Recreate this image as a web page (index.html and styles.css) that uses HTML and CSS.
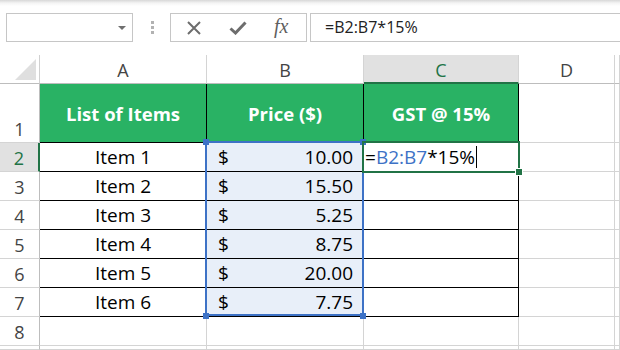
FILE: index.html
```html
<!DOCTYPE html>
<html lang="en">
<head>
    <meta charset="UTF-8">
    <title>GST formula</title>
    <link rel="stylesheet" href="styles.css">
</head>
<body>
    <div class="toolbar">
        <div class="namebox">
            <span class="arrow"></span>
        </div>
        <div class="dots"><span></span><span></span><span></span></div>
        <div class="fx-buttons">
            <svg class="icon" width="16" height="14" viewBox="0 0 16 14">
                <path d="M2 1 L14 13 M14 1 L2 13" stroke="#6d6d6d" stroke-width="2" fill="none"/>
            </svg>
            <svg class="icon" width="18" height="14" viewBox="0 0 18 14">
                <path d="M1.5 7.5 L6.5 12 L16.5 1.5" stroke="#6d6d6d" stroke-width="3" fill="none"/>
            </svg>
            <span class="fx">fx</span>
        </div>
        <div class="formula">=B2:B7*15%</div>
    </div>

    <div class="sheet">
        <!-- column headers -->
        <div class="c corner"><span class="tri"></span></div>
        <div class="c ch">A</div>
        <div class="c ch">B</div>
        <div class="c ch sel">C</div>
        <div class="c ch">D</div>
        <div class="c ch"></div>

        <!-- row 1 -->
        <div class="c rh">1</div>
        <div class="c t head">List of Items</div>
        <div class="c t head">Price ($)</div>
        <div class="c t head">GST @ 15%</div>
        <div class="c"></div>
        <div class="c"></div>

        <!-- row 2 -->
        <div class="c rh sel">2</div>
        <div class="c t item">Item 1</div>
        <div class="c t price"><span>$</span><span>10.00</span></div>
        <div class="c t edit">=<span class="ref">B2:B7</span>*15%<span class="caret"></span></div>
        <div class="c"></div>
        <div class="c"></div>

        <div class="c rh">3</div>
        <div class="c t item">Item 2</div>
        <div class="c t price"><span>$</span><span>15.50</span></div>
        <div class="c t"></div>
        <div class="c"></div>
        <div class="c"></div>

        <div class="c rh">4</div>
        <div class="c t item">Item 3</div>
        <div class="c t price"><span>$</span><span>5.25</span></div>
        <div class="c t"></div>
        <div class="c"></div>
        <div class="c"></div>

        <div class="c rh">5</div>
        <div class="c t item">Item 4</div>
        <div class="c t price"><span>$</span><span>8.75</span></div>
        <div class="c t"></div>
        <div class="c"></div>
        <div class="c"></div>

        <div class="c rh">6</div>
        <div class="c t item">Item 5</div>
        <div class="c t price"><span>$</span><span>20.00</span></div>
        <div class="c t"></div>
        <div class="c"></div>
        <div class="c"></div>

        <div class="c rh">7</div>
        <div class="c t item">Item 6</div>
        <div class="c t price"><span>$</span><span>7.75</span></div>
        <div class="c t"></div>
        <div class="c"></div>
        <div class="c"></div>

        <div class="c rh">8</div>
        <div class="c"></div>
        <div class="c"></div>
        <div class="c"></div>
        <div class="c"></div>
        <div class="c"></div>

        <div class="c rh"></div>
        <div class="c"></div>
        <div class="c"></div>
        <div class="c"></div>
        <div class="c"></div>
        <div class="c"></div>

        <!-- selection overlays -->
        <div class="range"></div>
        <span class="handle blue h-tl"></span>
        <span class="handle blue h-tr"></span>
        <span class="handle blue h-bl"></span>
        <span class="handle blue h-br"></span>
        <div class="active"></div>
        <span class="handle green h-active"></span>
    </div>
</body>
</html>
```

FILE: styles.css
```css
body {
    margin: 0;
    width: 620px;
    height: 350px;
    overflow: hidden;
    background-color: white;
    font-family: "Open Sans", "Liberation Sans", sans-serif;
    color: #000;
}

.toolbar {
    height: 55px;
    box-sizing: border-box;
    padding: 13px 0 0 6px;
    display: flex;
    align-items: flex-start;
    background: linear-gradient(#d8d8d8, #f4f4f4 3px, #fff 6px);
}

.namebox {
    width: 127px;
    height: 29px;
    box-sizing: border-box;
    border: 1px solid #c6c6c6;
    background-color: white;
    position: relative;
}

.arrow {
    position: absolute;
    left: 111px;
    top: 12px;
    border-left: 4px solid transparent;
    border-right: 4px solid transparent;
    border-top: 4px solid #6f6f6f;
}

.dots {
    margin-left: 18px;
    padding-top: 8px;
    display: flex;
    flex-direction: column;
    gap: 2px;
}

.dots span {
    width: 3px;
    height: 3px;
    background-color: #b2b2b2;
}

.fx-buttons {
    margin-left: 16px;
    width: 137px;
    height: 29px;
    box-sizing: border-box;
    border: 1px solid #c6c6c6;
    display: flex;
    align-items: center;
    padding-left: 15px;
    gap: 27px;
}

.fx {
    font-family: "Liberation Serif", serif;
    font-style: italic;
    font-size: 20px;
    color: #5f5f5f;
    margin-left: 0;
    margin-top: -2px;
}

.formula {
    margin-left: 3px;
    flex: 1;
    height: 29px;
    box-sizing: border-box;
    border: 1px solid #c6c6c6;
    border-right: none;
    padding-left: 14px;
    font-size: 16px;
    line-height: 26px;
    color: #222;
}

.sheet {
    position: relative;
    display: grid;
    grid-template-columns: 40px 167px 157px 155px 96px 1fr;
    grid-template-rows: 29px 59px repeat(7, 29px) 4px;
}

.c {
    box-sizing: border-box;
    border-right: 1px solid #d4d4d4;
    border-bottom: 1px solid #d4d4d4;
    display: flex;
    align-items: center;
    justify-content: center;
    font-size: 19px;
    min-width: 0;
    overflow: hidden;
}

.corner {
    position: relative;
    border-bottom-color: #bdbdbd;
    border-right-color: #d0d0d0;
}

.tri {
    position: absolute;
    left: 15px;
    top: 4px;
    width: 21px;
    height: 21px;
    background-color: #dfdfdf;
    clip-path: polygon(100% 0, 100% 100%, 0 100%);
}

.ch, .rh {
    font-size: 18px;
    color: #444;
    align-items: flex-end;
    line-height: 24px;
    padding-bottom: 1px;
}

.ch {
    border-bottom-color: #bdbdbd;
}

.rh {
    border-right-color: #bdbdbd;
}

.ch.sel {
    background-color: #e1e1e1;
    color: #217346;
    border-bottom: 2px solid #217346;
    padding-bottom: 0;
}

.rh.sel {
    background-color: #e1e1e1;
    color: #217346;
    border-right: 2px solid #217346;
}

.t {
    border-right-color: #000;
    border-bottom-color: #000;
}

.head {
    background-color: #29b264;
    color: white;
    font-weight: bold;
    font-size: 18.5px;
}

.price {
    background-color: #e8eff9;
    justify-content: space-between;
    padding: 0 10px 0 11px;
}

.edit {
    justify-content: flex-start;
    padding-left: 1px;
}

.ref {
    color: #3d72c6;
}

.caret {
    width: 1px;
    height: 22px;
    background-color: #000;
    margin-left: 1px;
}

.range {
    position: absolute;
    left: 205px;
    top: 86px;
    width: 159px;
    height: 175px;
    box-sizing: border-box;
    border: 2px solid #3d72c6;
}

.active {
    position: absolute;
    left: 362px;
    top: 86px;
    width: 158px;
    height: 32px;
    box-sizing: border-box;
    border: 2px solid #217346;
}

.handle {
    position: absolute;
    width: 6px;
    height: 6px;
}

.blue {
    background-color: #3d72c6;
}

.green {
    background-color: #217346;
    outline: 1px solid white;
}

.h-tl { left: 203px; top: 84px; }
.h-tr { left: 360px; top: 84px; }
.h-bl { left: 203px; top: 258px; }
.h-br { left: 360px; top: 258px; }
.h-active { left: 516px; top: 114px; }
```
